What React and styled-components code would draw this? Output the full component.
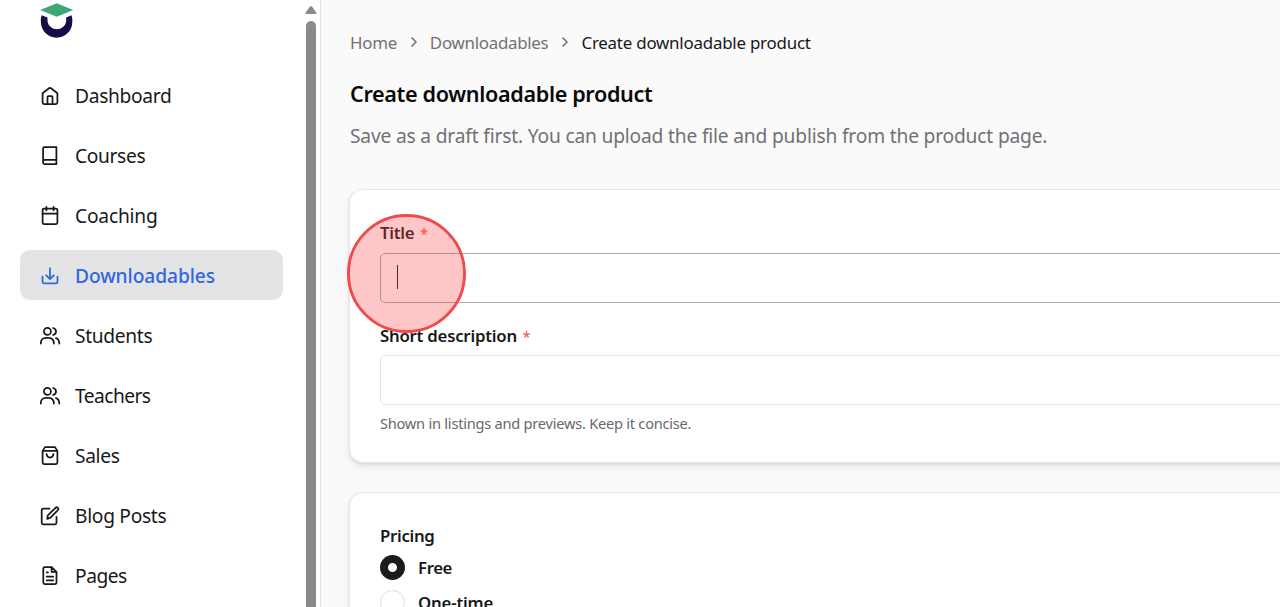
import React, { useState } from 'react';
import styled, { createGlobalStyle } from 'styled-components';

const GlobalStyle = createGlobalStyle`
  * {
    box-sizing: border-box;
  }

  body {
    margin: 0;
    overflow: hidden;
    background: #fafafa;
    color: #18181b;
    font-family: 'Segoe UI', 'Noto Sans', 'Open Sans', sans-serif;
  }
`;

const Page = styled.div`
  display: flex;
  height: 607px;
  overflow: hidden;
`;

const Sidebar = styled.aside`
  display: flex;
  flex: 0 0 321px;
  background: #fff;
  border-right: 1px solid #e4e4e7;
`;

const SidebarContent = styled.div`
  flex: 0 0 303px;
  padding: 3px 20px 0;
`;

const Logo = styled.svg`
  display: block;
  width: 34px;
  height: 36px;
  margin-left: 20px;
`;

const Nav = styled.nav`
  display: flex;
  flex-direction: column;
  gap: 10px;
  margin-top: 31px;
`;

const NavItem = styled.a`
  display: flex;
  align-items: center;
  gap: 14px;
  height: 50px;
  padding: 0 20px 0 19px;
  border-radius: 10px;
  cursor: pointer;
  white-space: nowrap;
  font-size: 19.2px;
  font-weight: ${props => (props.$active ? 500 : 400)};
  letter-spacing: ${props => props.$spacing}px;
  color: ${props => (props.$active ? '#2f66e3' : '#18181b')};
  background: ${props => (props.$active ? '#e4e4e6' : 'transparent')};
`;

const NavIcon = styled.svg`
  flex: none;
  width: 22px;
  height: 20px;
  margin-top: 2px;
  fill: none;
  stroke: currentColor;
  stroke-width: 1.75;
  stroke-linecap: round;
  stroke-linejoin: round;
`;

const Scrollbar = styled.div`
  display: flex;
  flex-direction: column;
  align-items: center;
  flex: 0 0 16px;
  padding-top: 6px;
`;

const ScrollArrow = styled.svg`
  display: block;
  width: 12px;
  height: 8px;
  fill: #8a8a8a;
`;

const ScrollThumb = styled.div`
  flex: 1;
  width: 10px;
  margin-top: 7px;
  border-radius: 5px 5px 0 0;
  background: #8a8a8a;
`;

const Main = styled.main`
  flex: 1;
  min-width: 0;
  padding: 29px 0 0 28px;
`;

const Breadcrumb = styled.nav`
  display: flex;
  align-items: center;
  height: 26px;
  padding-left: 1px;
  font-size: 16.9px;
  white-space: nowrap;
`;

const Crumb = styled.span`
  color: ${props => (props.$current ? '#18181b' : '#717176')};
  letter-spacing: ${props => props.$spacing}px;
`;

const Chevron = styled.svg`
  width: 8px;
  height: 12px;
  margin: 0 12px 0 13px;
  fill: none;
  stroke: #717176;
  stroke-width: 1.5;
`;

const Title = styled.h1`
  margin: 24px 0 0 1px;
  font-size: 21.6px;
  font-weight: 600;
  line-height: 30px;
  letter-spacing: -0.35px;
  color: #09090b;
  white-space: nowrap;
`;

const Description = styled.p`
  margin: 13px 0 0 1px;
  font-size: 19.2px;
  line-height: 28px;
  letter-spacing: -0.18px;
  color: #717176;
  white-space: nowrap;
`;

const Card = styled.section`
  width: 1000px;
  height: ${props => props.$height}px;
  padding: ${props => props.$top}px 30px 0;
  margin-top: ${props => props.$gap}px;
  border: 1px solid #e7e7e9;
  border-radius: 14px;
  background: #fff;
  box-shadow: 0 4px 7px rgba(0, 0, 0, 0.09), 0 1px 3px rgba(0, 0, 0, 0.06);
`;

const Label = styled.label`
  display: block;
  height: 24px;
  line-height: 24px;
  font-size: 16.8px;
  font-weight: 600;
  letter-spacing: ${props => props.$spacing}px;
  white-space: nowrap;
`;

const Required = styled.span`
  margin-left: 6px;
  color: #ef5a5a;
  font-size: 14px;
  font-weight: 500;
`;

const Input = styled.input`
  display: block;
  width: 100%;
  height: 50px;
  margin: ${props => props.$before}px 0 ${props => props.$after}px;
  padding: 0 15px;
  outline: none;
  border: 1px solid ${props => (props.$focused ? '#aaa' : '#e5e5e8')};
  border-radius: 5px;
  background: #fff;
  font: inherit;
`;

const Field = styled.div`
  position: relative;
`;

const Caret = styled.div`
  position: absolute;
  left: 17px;
  top: 44px;
  width: 1px;
  height: 24px;
  background: #18181b;
`;

const Helper = styled.p`
  margin: 0;
  font-size: 14.6px;
  line-height: 20px;
  letter-spacing: -0.235px;
  color: #68686d;
  white-space: nowrap;
`;

const Option = styled.div`
  display: flex;
  align-items: center;
  gap: 13px;
  height: 25px;
  margin-top: ${props => props.$gap}px;
`;

const Radio = styled.span`
  flex: none;
  width: 25px;
  height: 25px;
  border: ${props => (props.$checked ? '8px solid #1b1b1d' : '1px solid #dedee1')};
  border-radius: 50%;
  background: #fff;
`;

const ClickMarker = styled.div`
  position: absolute;
  left: 347px;
  top: 214px;
  width: 119px;
  height: 119px;
  border: 3px solid #ef4a4d;
  border-radius: 50%;
  background: rgba(255, 65, 70, 0.3);
  background-clip: padding-box;
  pointer-events: none;
`;

const icons = {
  home: (
    <>
      <path d="M3.6 7.2 L10 2.3 Q11 1.5 12 2.3 L18.4 7.2 V16.4 Q18.4 18 16.8 18 H5.2 Q3.6 18 3.6 16.4 Z" />
      <path d="M8.5 18 V11.1 Q8.5 10.1 9.5 10.1 H12.5 Q13.5 10.1 13.5 11.1 V18" />
    </>
  ),
  book: (
    <path d="M5.3 1 H17.4 V18 H5.6 Q4.1 18 4.1 16.4 V2.4 Q4.1 1 5.3 1 M4.1 15.9 Q4.1 13.9 5.8 13.9 H17.4" />
  ),
  calendar: (
    <>
      <rect x="3.6" y="2.7" width="14.8" height="15.3" rx="1.4" />
      <path d="M3.6 7.5 H18.4 M7.4 .9 V4.3 M14.6 .9 V4.3" />
    </>
  ),
  download: (
    <path d="M11 2 V13 M7.2 9.3 L11 13.1 L14.8 9.3 M3.5 10.7 V15.5 Q3.5 17.4 5.4 17.4 H16.6 Q18.5 17.4 18.5 15.5 V10.7" />
  ),
  users: (
    <>
      <circle cx="8.4" cy="5.4" r="3.5" />
      <path d="M1.8 17.6 Q1.8 11.8 7.2 11.8 H9.4 Q14.9 11.8 14.9 17.6 M14.2 2 Q17 2.8 17 5.4 Q17 8 14.2 8.9 M17 12.2 Q20.2 13.3 20.3 17.6" />
    </>
  ),
  bag: (
    <path d="M6 1.1 H16 L18.4 4.9 V16.5 Q18.4 18 16.9 18 H5.1 Q3.6 18 3.6 16.5 V4.9 Z M3.6 4.9 H18.4 M7.6 8.2 Q7.9 11.5 11 11.5 Q14.1 11.5 14.4 8.2" />
  ),
  edit: (
    <path d="M10.5 2.6 H4.2 Q2.7 2.6 2.7 4.1 V16.8 Q2.7 18.3 4.2 18.3 H16 Q17.5 18.3 17.5 16.8 V10.8 M8.2 12.8 L8.8 9.4 L16.5 1.8 Q17.5 .7 18.8 1.8 Q20 3 18.9 4.2 L11.2 11.9 Z" />
  ),
  page: (
    <path d="M12.6 1 H5.8 Q4.3 1 4.3 2.5 V16.6 Q4.3 18.1 5.8 18.1 H16 Q17.5 18.1 17.5 16.6 V5.9 L12.6 1 V5.9 H17.5 M7.7 6.3 H9 M7.7 10.5 H14.2 M7.7 14.3 H14.2" />
  )
};

const navItems = [
  { label: 'Dashboard', icon: 'home', spacing: -0.31 },
  { label: 'Courses', icon: 'book', spacing: -0.35 },
  { label: 'Coaching', icon: 'calendar', spacing: -0.2 },
  { label: 'Downloadables', icon: 'download', spacing: -0.08 },
  { label: 'Students', icon: 'users', spacing: -0.33 },
  { label: 'Teachers', icon: 'users', spacing: -0.55 },
  { label: 'Sales', icon: 'bag', spacing: -0.35 },
  { label: 'Blog Posts', icon: 'edit', spacing: -0.3 },
  { label: 'Pages', icon: 'page', spacing: -0.48 }
];

const Separator = () => (
  <Chevron viewBox="0 0 8 12">
    <path d="M1.5 1.5 L6 6 L1.5 10.5" />
  </Chevron>
);

const App = () => {
  const [active, setActive] = useState('Downloadables');
  const [pricing, setPricing] = useState('Free');

  return (
    <Page>
      <GlobalStyle />
      <Sidebar>
        <SidebarContent>
          <Logo viewBox="0 0 34 36">
            <path d="M1.6 12.2 L7.5 14.6 V18.5 A9.5 9.5 0 0 0 26.2 18.5 V14.6 L31.5 12.2 A16 16 0 0 1 32.3 19 A15.7 15.7 0 0 1 .9 19 A16 16 0 0 1 1.6 12.2Z" fill="#160d46" />
            <path d="M0 7 L16.7 .3 L33.3 7 L16.7 13.8Z" fill="#3da873" />
          </Logo>
          <Nav>
            {navItems.map(item => (
              <NavItem
                key={item.label}
                $active={item.label === active}
                $spacing={item.spacing}
                onClick={() => setActive(item.label)}
              >
                <NavIcon viewBox="0 0 22 20">{icons[item.icon]}</NavIcon>
                {item.label}
              </NavItem>
            ))}
          </Nav>
        </SidebarContent>
        <Scrollbar>
          <ScrollArrow viewBox="0 0 12 8">
            <path d="M5 .6 Q6 -.5 7 .6 L11.3 6.5 Q11.8 8 10.5 8 H1.5 Q.2 8 .7 6.5 Z" />
          </ScrollArrow>
          <ScrollThumb />
        </Scrollbar>
      </Sidebar>

      <Main>
        <Breadcrumb>
          <Crumb $spacing={-0.3}>Home</Crumb>
          <Separator />
          <Crumb $spacing={-0.28}>Downloadables</Crumb>
          <Separator />
          <Crumb $current $spacing={-0.22}>Create downloadable product</Crumb>
        </Breadcrumb>
        <Title>Create downloadable product</Title>
        <Description>
          Save as a draft first. You can upload the file and publish from the product page.
        </Description>

        <Card $height={274} $top={31} $gap={39}>
          <Field>
            <Label $spacing={-0.3}>Title<Required>*</Required></Label>
            <Input $focused $before={8} $after={21} />
            <Caret />
          </Field>
          <Field>
            <Label $spacing={-0.24}>Short description<Required>*</Required></Label>
            <Input $before={7} $after={8} />
            <Helper>Shown in listings and previews. Keep it concise.</Helper>
          </Field>
        </Card>

        <Card $height={300} $top={31} $gap={29}>
          <Label $spacing={-0.32}>Pricing</Label>
          {['Free', 'One-time'].map((option, index) => (
            <Option key={option} $gap={index === 0 ? 7 : 10} onClick={() => setPricing(option)}>
              <Radio $checked={pricing === option} />
              <Label $spacing={index === 0 ? -0.4 : -0.18}>{option}</Label>
            </Option>
          ))}
        </Card>
      </Main>
      <ClickMarker />
    </Page>
  );
};

export default App;
